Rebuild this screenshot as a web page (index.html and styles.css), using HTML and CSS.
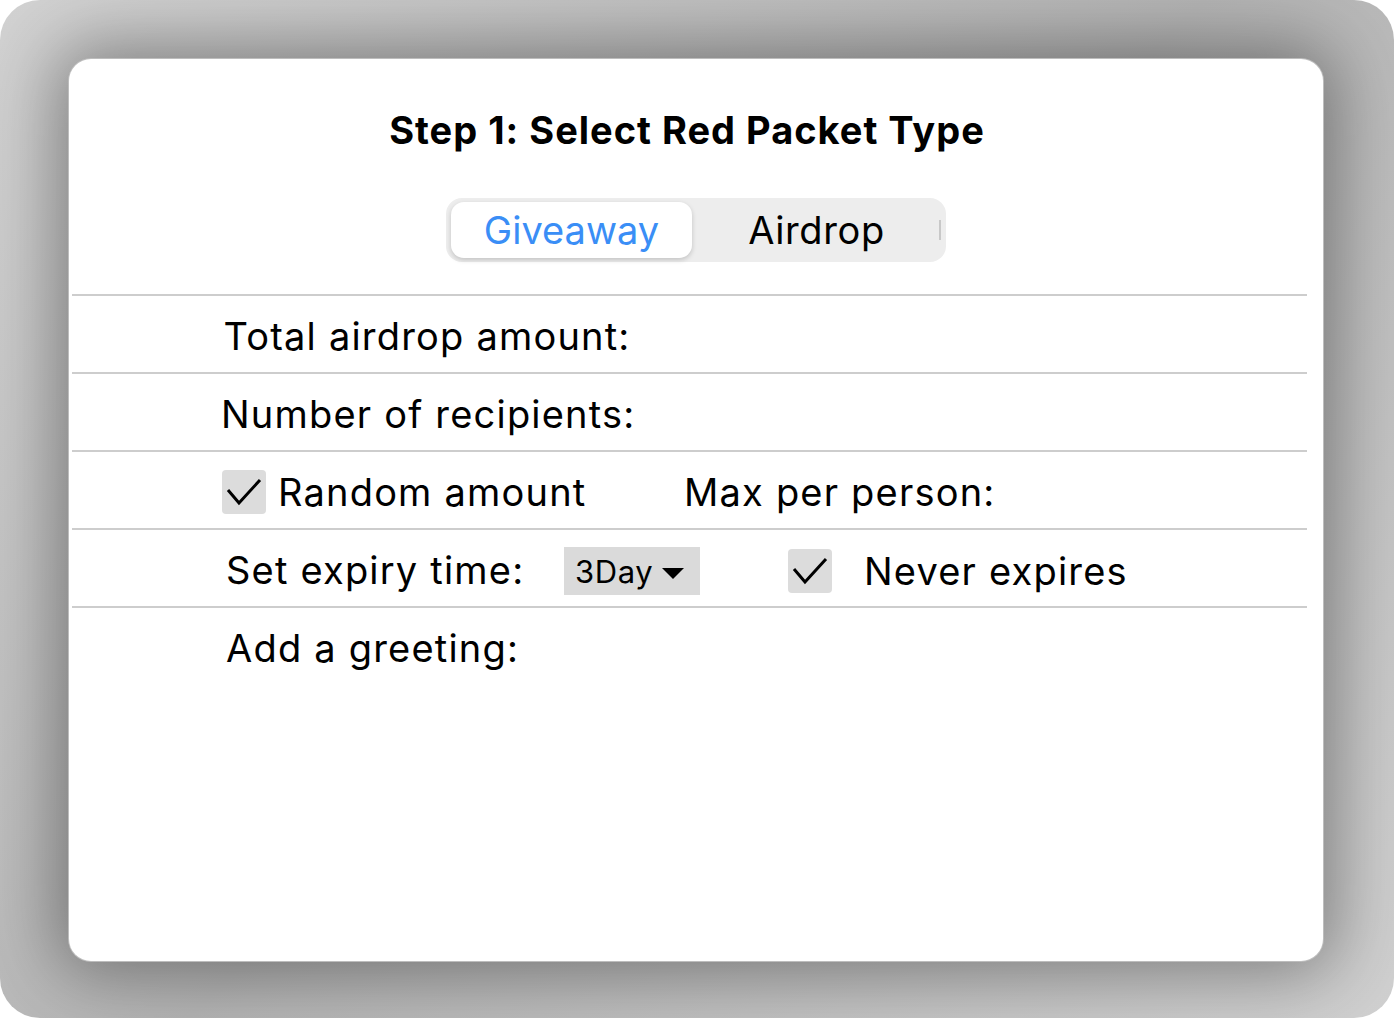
FILE: index.html
```html
<!DOCTYPE html>
<html>
<head>
<meta charset="utf-8">
<link rel="stylesheet" href="styles.css">
</head>
<body>
<div class="frame">
  <div class="card">
    <h1 class="title">Step 1: Select Red Packet Type</h1>
    <div class="seg-wrap">
      <div class="seg">
        <div class="seg-item active">Giveaway</div>
        <div class="seg-item second">Airdrop</div>
        <div class="seg-sep"></div>
      </div>
    </div>
    <div class="rows">
      <div class="row">
        <div class="label-center">Total airdrop amount:</div>
      </div>
      <div class="row">
        <div class="label-center">Number of recipients:</div>
      </div>
      <div class="row">
        <div class="check-group">
          <span class="checkbox"><svg viewBox="0 0 44 44" width="44" height="44"><path d="M6 20 L17 33 L38 10" fill="none" stroke="#000" stroke-width="3"/></svg></span>
          <span class="text">Random amount</span>
        </div>
        <span class="text">Max per person:</span>
      </div>
      <div class="row">
        <span class="text label-left">Set expiry time:</span>
        <div class="dropdown"><span>3Day</span><span class="caret"></span></div>
        <span class="checkbox cb-never"><svg viewBox="0 0 44 44" width="44" height="44"><path d="M6 20 L17 33 L38 10" fill="none" stroke="#000" stroke-width="3"/></svg></span>
        <span class="text never">Never expires</span>
      </div>
      <div class="row last">
        <span class="text label-left">Add a greeting:</span>
      </div>
    </div>
  </div>
</div>
</body>
</html>
```
FILE: styles.css
```css
* { box-sizing: border-box; }
html, body { margin: 0; padding: 0; background: #ffffff; }
body { font-family: Inter, "Noto Sans", sans-serif; color: #000; }

.frame {
  width: 1394px;
  height: 1018px;
  border-radius: 40px;
  background: linear-gradient(135deg, #d2d2d2 0%, #b4b4b4 50%, #d0d0d0 100%);
  padding: 59px 71px 57px 69px;
  overflow: hidden;
}

.card {
  width: 1254px;
  height: 902px;
  background: #fff;
  border-radius: 22px;
  box-shadow: 0 0 0 1px #bdbdbd, 0 0 70px 12px rgba(0, 0, 0, 0.38);
  padding-top: 48px;
}

.title {
  margin: 0;
  text-align: center;
  font-size: 38px;
  font-weight: 700;
  letter-spacing: 1px;
  line-height: 46px;
  padding-right: 18px;
}

.seg-wrap {
  display: flex;
  justify-content: center;
  margin-top: 45px;
}

.seg {
  position: relative;
  display: flex;
  width: 500px;
  height: 64px;
  background: #ededed;
  border-radius: 16px;
  padding: 4px 5px;
}

.seg-item {
  width: 241px;
  height: 56px;
  display: flex;
  align-items: center;
  justify-content: center;
  font-size: 38px;
  color: #000;
  border-radius: 13px;
}

.seg-item.second {
  flex: 1;
  letter-spacing: 0.6px;
}

.seg-item.active {
  background: #fff;
  color: #3a8ef6;
  box-shadow: 0 2px 5px rgba(0, 0, 0, 0.18);
}

.seg-sep {
  position: absolute;
  right: 5px;
  top: 22px;
  width: 2px;
  height: 20px;
  background: #c8c8c8;
}

.rows {
  margin: 32px 16px 0 3px;
}

.row {
  height: 78px;
  border-top: 2px solid #cdcdcd;
  display: flex;
  align-items: center;
  padding-left: 150px;
  padding-top: 4px;
}

.label-center {
  width: 412px;
  text-align: center;
  font-size: 38px;
  letter-spacing: 1.2px;
  margin-left: -1px;
  white-space: nowrap;
}

.text { font-size: 38px; letter-spacing: 1.2px; white-space: nowrap; }

.check-group {
  display: flex;
  align-items: center;
  width: 462px;
}

.checkbox {
  width: 44px;
  height: 44px;
  background: #dcdcdc;
  border-radius: 4px;
  display: inline-flex;
  flex: none;
}

.check-group .checkbox { margin-right: 12px; margin-top: -1px; }

.label-left { margin-left: 4px; width: 338px; }

.dropdown {
  width: 136px;
  height: 48px;
  background: #dadada;
  display: flex;
  align-items: center;
  padding-left: 11px;
  font-size: 31px;
  letter-spacing: 0.6px;
  margin-top: 2px;
}

.caret {
  width: 0;
  height: 0;
  border-left: 11px solid transparent;
  border-right: 11px solid transparent;
  border-top: 11px solid #000;
  margin-left: 9px;
  margin-top: 4px;
}

.cb-never { margin-left: 88px; margin-top: 2px; }

.never { margin-left: 32px; margin-top: 2px; }
```
